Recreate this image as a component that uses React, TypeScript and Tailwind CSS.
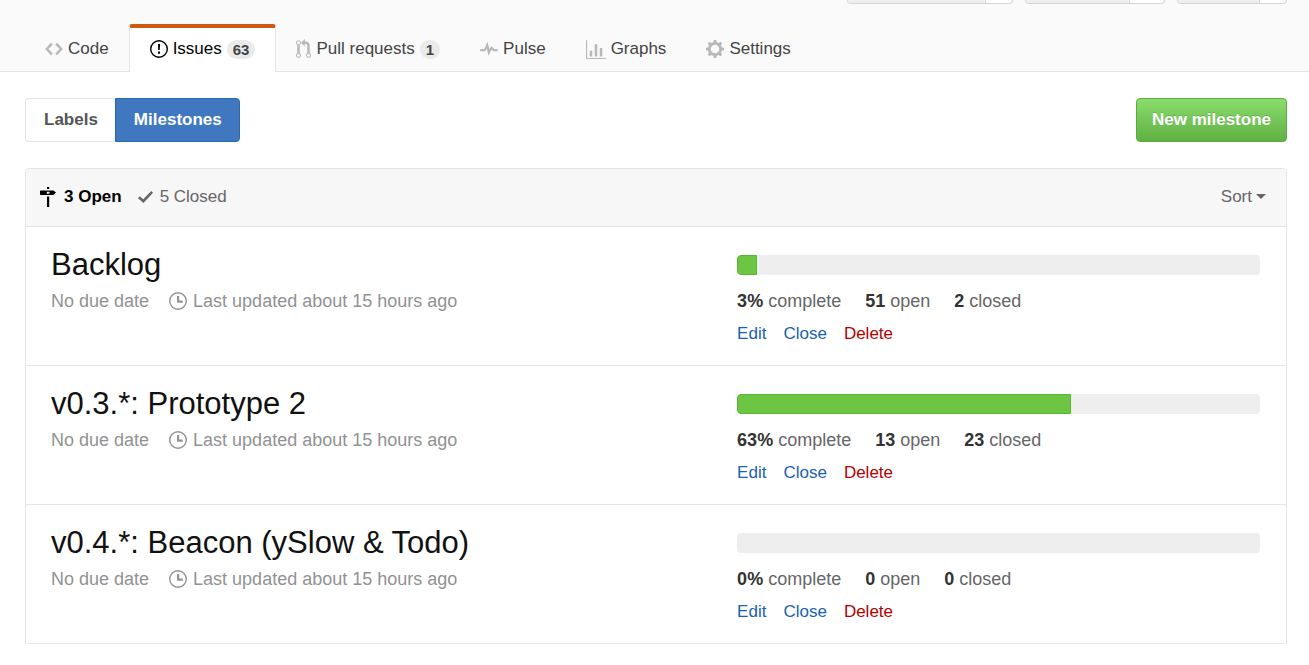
import type { ReactNode } from "react";

type IconProps = { d: string; box: string; className: string };

function Icon({ d, box, className }: IconProps) {
  return (
    <svg viewBox={box} className={`shrink-0 ${className}`} fill="currentColor" fillRule="evenodd" aria-hidden="true">
      <path d={d} />
    </svg>
  );
}

const CODE = "M9.5 3L8 4.5 11.5 8 8 11.5 9.5 13 14 8 9.5 3zm-5 0L0 8l4.5 5L6 11.5 2.5 8 6 4.5 4.5 3z";
const ISSUE =
  "M7 2.1a5.9 5.9 0 1 1 0 11.8A5.9 5.9 0 0 1 7 2.1zM7 1a7 7 0 1 0 0 14A7 7 0 0 0 7 1zm.8 3.2H6.2l.2 4.6h1.2zM7.8 10H6.2v1.6h1.6z";
const PULL =
  "M11 11.28V5c-.03-.78-.34-1.47-.94-2.06C9.46 2.35 8.78 2.03 8 2H7V0L4 3l3 3V4h1c.27.02.48.11.69.31.21.2.3.42.31.69v6.28A1.993 1.993 0 0 0 10 15a1.993 1.993 0 0 0 1-3.72zm-1 2.92c-.66 0-1.2-.55-1.2-1.2 0-.65.55-1.2 1.2-1.2.65 0 1.2.55 1.2 1.2 0 .65-.55 1.2-1.2 1.2zM4 3c0-1.11-.89-2-2-2a1.993 1.993 0 0 0-1 3.72v6.56A1.993 1.993 0 0 0 2 15a1.993 1.993 0 0 0 1-3.72V4.72c.59-.34 1-.98 1-1.72zm-.8 10c0 .66-.55 1.2-1.2 1.2-.65 0-1.2-.55-1.2-1.2 0-.65.55-1.2 1.2-1.2.65 0 1.2.55 1.2 1.2zM2 4.2C1.34 4.2.8 3.65.8 3c0-.65.55-1.2 1.2-1.2.65 0 1.2.55 1.2 1.2 0 .65-.55 1.2-1.2 1.2z";
const PULSE = "M11.3 8L9 5.7 7.3 8 5.8 2.2 3.2 8H0v1.7h4.2l1.1-2.2 1.2 5.6 2.6-4.6 1.4 1.2H14V8z";
const GRAPH = "M16 14.2v.8H0V0h.9v14.2zM5 13H3V8.5h2zm4 0H7V3.2h2zm4 0h-2V6.2h2z";
const MILESTONE =
  "M7 0h2.2v2H7zM.8 3.4h12.6L16 5.6 13.4 8H.8C.3 8 0 7.7 0 7.2v-3c0-.5.3-.8.8-.8zM6.8 4.7v2h2.6v-2zM7 9.4h2.2V20H7z";
const CHECK = "M12 4.6l-7.6 8.2L0 9l1.3-1.6 2.9 2.4 6.4-6.6z";
const CLOCK =
  "M7.9 7.6h2.8v1.7H7.2c-.6 0-1-.4-1-1V4.2h1.7zM7 2.1a5.9 5.9 0 1 1 0 11.8A5.9 5.9 0 0 1 7 2.1zM7 1a7 7 0 1 0 0 14A7 7 0 0 0 7 1z";

function Gear() {
  return (
    <svg viewBox="0 0 18 18" className="size-[18px] shrink-0" aria-hidden="true">
      <circle cx="9" cy="9" r="5.7" fill="none" stroke="currentColor" strokeWidth="2.8" />
      {[0, 45, 90, 135, 180, 225, 270, 315].map((angle) => (
        <path key={angle} d="M7.2 3L7.8 0h2.4l.6 3z" fill="currentColor" transform={`rotate(${angle} 9 9)`} />
      ))}
    </svg>
  );
}

type TabProps = { icon: ReactNode; label: string; count?: number; active?: boolean };

function Tab({ icon, label, count, active }: TabProps) {
  return (
    <a
      href="#"
      aria-current={active ? "page" : undefined}
      className={
        active
          ? "flex h-12 items-center rounded-t-[3px] border-x border-t-4 border-x-[#e5e5e5] border-t-[#cc5a14] bg-white px-5 pb-[2px] text-black"
          : "flex h-12 items-center px-5 pt-[2px] text-[#444]"
      }
    >
      <span className={active ? "flex" : "flex text-[#b8b8b8]"}>{icon}</span>
      <span className="ml-[5px]">{label}</span>
      {count !== undefined && (
        <span className="ml-[5px] rounded-full bg-[#eaeaea] px-[6px] text-[15px] leading-[19px] font-bold text-[#444]">
          {count}
        </span>
      )}
    </a>
  );
}

function Stub({ className, countClassName }: { className: string; countClassName: string }) {
  return (
    <div className={`flex h-1 rounded-b-[4px] border border-t-0 border-[#d5d5d5] bg-white ${className}`}>
      <div className="flex-1 rounded-bl-[3px] border-r border-[#d5d5d5] bg-[#eee]" />
      <div className={countClassName} />
    </div>
  );
}

type Milestone = { title: string; percent: number; bar: number; open: number; closed: number };

const milestones: Milestone[] = [
  { title: "Backlog", percent: 3, bar: 3.8, open: 51, closed: 2 },
  { title: "v0.3.*: Prototype 2", percent: 63, bar: 63.9, open: 13, closed: 23 },
  { title: "v0.4.*: Beacon (ySlow & Todo)", percent: 0, bar: 0, open: 0, closed: 0 },
];

function MilestoneRow({ title, percent, bar, open, closed }: Milestone) {
  return (
    <li className="flex border-t border-[#e5e5e5] pt-5 pr-[26px] pb-[19px] pl-[25px]">
      <div className="min-w-0 flex-1">
        <h2 className="text-[31px] leading-9 text-[#111]">
          <a href="#">{title}</a>
        </h2>
        <div className="mt-[6px] flex items-center text-[18px] leading-6 text-[#929292]">
          <span>No due date</span>
          <Icon d={CLOCK} box="0 1 14 14" className="mr-[6px] ml-5 size-[18px]" />
          <span>Last updated about 15 hours ago</span>
        </div>
      </div>
      <div className="w-[43.25%] pt-2">
        <div
          role="progressbar"
          aria-label={title}
          aria-valuenow={percent}
          className="h-5 overflow-hidden rounded-[4px] bg-[#eee]"
        >
          {bar > 0 && (
            <div className="h-full rounded-l-[4px] border border-[#58b82c] bg-[#6cc644]" style={{ width: `${bar}%` }} />
          )}
        </div>
        <div className="mt-[14px] flex gap-6 text-[18px] leading-6 text-[#666]">
          <span>
            <b className="text-[#333]">{percent}%</b> complete
          </span>
          <span>
            <b className="text-[#333]">{open}</b> open
          </span>
          <span>
            <b className="text-[#333]">{closed}</b> closed
          </span>
        </div>
        <div className="mt-[9px] flex gap-[17px] leading-6 text-[#1a5fb4]">
          <a href="#">Edit</a>
          <button type="button">Close</button>
          <button type="button" className="text-[#b30000]">
            Delete
          </button>
        </div>
      </div>
    </li>
  );
}

export default function App() {
  return (
    <div className="min-h-screen bg-white font-['Liberation_Sans',Arial,sans-serif] text-[17px]">
      <header className="border-b border-[#e5e5e5] bg-[#fafafa]">
        <div className="flex justify-end gap-3 pr-[22px]">
          <Stub className="w-[166px]" countClassName="w-[26px]" />
          <Stub className="w-[140px]" countClassName="w-[34px]" />
          <Stub className="w-[110px]" countClassName="w-[26px]" />
        </div>
        <nav aria-label="Repository" className="-mb-px flex pt-5 pl-[25px]">
          <Tab icon={<Icon d={CODE} box="0 0 14 16" className="h-5 w-[18px]" />} label="Code" />
          <Tab icon={<Icon d={ISSUE} box="0 1 14 14" className="size-[18px]" />} label="Issues" count={63} active />
          <Tab icon={<Icon d={PULL} box="0 0 12 16" className="h-5 w-[15px]" />} label="Pull requests" count={1} />
          <Tab icon={<Icon d={PULSE} box="0 0 14 16" className="h-5 w-[18px]" />} label="Pulse" />
          <Tab icon={<Icon d={GRAPH} box="0 0 16 15" className="h-[19px] w-5" />} label="Graphs" />
          <Tab icon={<Gear />} label="Settings" />
        </nav>
      </header>

      <main className="px-[22px] pt-[26px] pl-[25px]">
        <div className="flex items-center justify-between font-bold">
          <nav aria-label="Issue sections" className="flex leading-[42px]">
            <a href="#" className="rounded-l-[4px] border border-r-0 border-[#e5e5e5] pr-[17px] pl-[18px] text-[#555]">
              Labels
            </a>
            <a
              href="#"
              aria-current="page"
              className="rounded-r-[4px] border border-[#2a66b0] bg-[#4078c0] pr-[17px] pl-[18px] text-white"
            >
              Milestones
            </a>
          </nav>
          <button
            type="button"
            className="rounded-[4px] border border-[#5ca941] bg-linear-to-b from-[#8add6d] to-[#60b044] px-[15px] leading-[42px] text-white text-shadow-[0_-1px_0_rgb(0_0_0/0.15)]"
          >
            New milestone
          </button>
        </div>

        <section className="mt-[26px] rounded-t-[4px] border border-[#e5e5e5]">
          <div className="flex h-[57px] items-center rounded-t-[3px] bg-[#f7f7f7] pr-5 pb-[2px] pl-[14px] text-[#666]">
            <a href="#" className="flex items-center font-bold text-black">
              <Icon d={MILESTONE} box="0 0 16 20" className="mr-2 h-5 w-4" />3 Open
            </a>
            <a href="#" className="ml-4 flex items-center">
              <Icon d={CHECK} box="0 0 12 16" className="mr-[7px] h-5 w-[15px]" />5 Closed
            </a>
            <button type="button" className="ml-auto flex items-center gap-1">
              Sort
              <Icon d="M0 0h10L5 5z" box="0 0 10 5" className="h-[5px] w-[10px]" />
            </button>
          </div>
          <ul>
            {milestones.map((milestone) => (
              <MilestoneRow key={milestone.title} {...milestone} />
            ))}
          </ul>
        </section>
      </main>
    </div>
  );
}
